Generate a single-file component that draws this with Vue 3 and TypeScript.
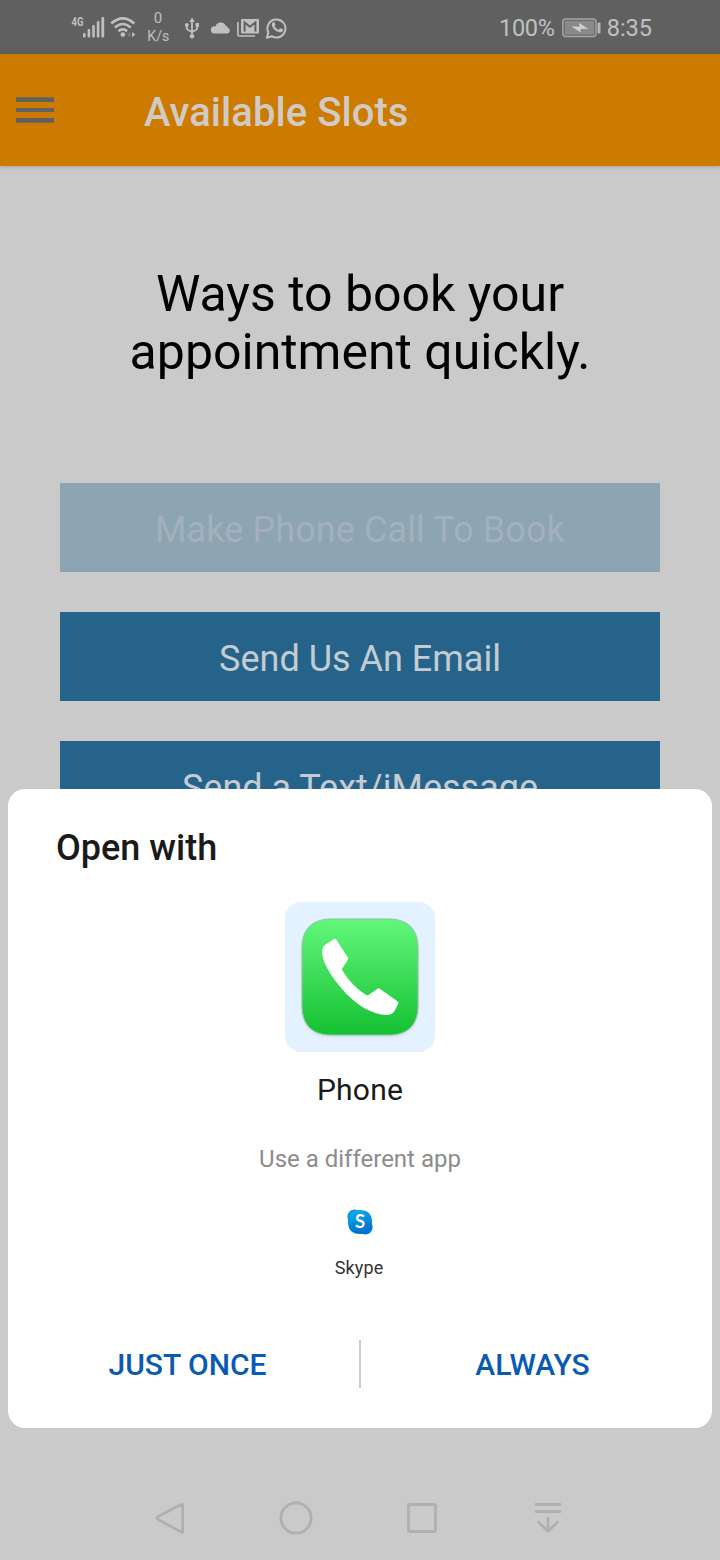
<script setup lang="ts">
interface Action { label: string; faded?: boolean; cls: string }

const headingLines: string[] = ['Ways to book your', 'appointment quickly.']
const actions: Action[] = [
  { label: 'Make Phone Call To Book', faded: true, cls: 'call' },
  { label: 'Send Us An Email', cls: 'email' },
  { label: 'Send a Text/iMessage', cls: 'text' },
]
</script>

<template>
  <div class="screen">
    <header class="status">
      <svg class="status-icons" width="300" height="54" viewBox="0 0 300 54">
        <text class="net" x="71.5" y="26" textLength="12" lengthAdjust="spacingAndGlyphs">4G</text>
        <g fill="#c0c0c0">
          <rect x="83" y="33" width="2.6" height="4.5" rx="1" />
          <rect x="87.6" y="29" width="2.6" height="8.500" rx="1" />
          <rect x="92.2" y="25" width="2.6" height="12.5" rx="1" />
          <rect x="96.8" y="21" width="2.6" height="16.5" rx="1" />
          <rect x="101.4" y="17" width="2.8" height="20.5" rx="1" />
        </g>
        <g fill="none" stroke="#c0c0c0" stroke-width="2.6">
          <path d="M111.300 23.500Q122.800 13.200 134.300 23.500" />
          <path d="M114.900 27.500Q122.800 20.500 130.700 27.500" />
          <path d="M118.500 31.300Q122.800 27.600 127.100 31.300" />
        </g>
        <circle cx="122.800" cy="34.600" r="2.300" fill="#c0c0c0" />
        <path d="M130.300 32.200v4.800l-3-2.400z" fill="#858585" />
        <path d="M132.200 32v5.200l3.100-2.600z" fill="#c0c0c0" />
        <text class="speed" x="158" y="23" text-anchor="middle">0</text>
        <text class="speed" x="158.300" y="41" text-anchor="middle" textLength="22" lengthAdjust="spacingAndGlyphs">K/s</text>
        <g fill="none" stroke="#c0c0c0" stroke-width="1.800">
          <path d="M192 20v16M186.800 25.500v2.700q0 1.300 1.300 1.800l3.900 2.100l3.900-2.100q1.300-.5 1.300-1.800v-3" />
        </g>
        <path d="M192 17.500l2.800 4.500h-5.600z" fill="#c0c0c0" />
        <circle cx="192" cy="36.300" r="2.200" fill="#c0c0c0" />
        <circle cx="186.800" cy="25" r="1.900" fill="#c0c0c0" />
        <rect x="195.500" y="23" width="3.500" height="3.700" fill="#c0c0c0" />
        <path d="M213.500 33.500a3.700 3.700 0 0 1 .4-7.200q1-.1 1.500.2a5.600 5.600 0 0 1 10.300-.9a3.100 3.100 0 0 1 1.800 2a3 3 0 0 1-.2 5.900z" fill="#c0c0c0" />
        <path d="M237.900 22v12.500q0 1.500 1.500 1.500h15.600" fill="none" stroke="#c0c0c0" stroke-width="1.700" />
        <rect x="241" y="19" width="18" height="14.500" rx="1" fill="#c0c0c0" />
        <path d="M244.600 31.500v-9l5.400 4.300l5.400-4.300v9" fill="none" stroke="#606060" stroke-width="2" />
        <path d="M266.800 37.700l1.500-5.300a9 9 0 1 1 3.600 3.900z" fill="none" stroke="#c0c0c0" stroke-width="2" stroke-linejoin="round" />
        <path d="M272.600 22.600q1.400-1.300 2 0l.8 2q.1.600-.9 1.700q1.400 2.500 4 3.600l1.300-1.500q.4-.4.900-.1l2 1q.8.500.1 1.700c-1 1.500-2.800 1.700-4.500 1c-3-1-5.200-3.300-6.200-5.700q-.7-2 .5-3.700z" fill="#c0c0c0" />
      </svg>
      <div class="power">
        <span class="pct">100%</span>
        <svg class="battery" width="40" height="20" viewBox="0 0 40 20">
          <rect x="1.800" y="1" width="33.200" height="17.500" rx="3" fill="#6b6b6b" stroke="#a6a6a6" stroke-width="1.400" />
          <rect x="3.800" y="3" width="29.200" height="13.500" rx="1" fill="#8a8a8a" />
          <path d="M10.500 8.600l8.200 .1l-.8-3.900l9.300 6.200l-7.800-.2l.6 3.700z" fill="#d2d2d2" />
          <rect x="36.500" y="4.500" width="3" height="11" rx="1" fill="#b5b5b5" />
        </svg>
        <span class="clock">8:35</span>
      </div>
    </header>

    <nav class="appbar">
      <svg class="menu" width="38" height="26" viewBox="0 0 38 26" fill="#606060">
        <rect y="0.300" width="38" height="4.700" />
        <rect y="11" width="38" height="4" />
        <rect y="21" width="38" height="4.700" />
      </svg>
      <h1 class="title">Available Slots</h1>
    </nav>

    <main class="content">
      <h2 class="heading">
        <span v-for="(line, i) in headingLines" :key="line" :class="['line', 'line' + i]">{{ line }}</span>
      </h2>
      <div class="actions">
        <button v-for="a in actions" :key="a.label" :class="['action', a.cls, { faded: a.faded }]">{{ a.label }}</button>
      </div>
    </main>

    <section class="sheet">
      <h3 class="sheet-title">Open with</h3>
      <div class="tile">
        <svg width="150" height="150" viewBox="0 0 150 150">
          <defs>
            <linearGradient id="green" x1="0" y1="0" x2="0" y2="1">
              <stop offset="0" stop-color="#62f77b" />
              <stop offset="1" stop-color="#15c032" />
            </linearGradient>
          </defs>
          <path class="squircle" d="M47 17H103C123 17 133 27 133 47V103C133 123 123 133 103 133H47C27 133 17 123 17 103V47C17 27 27 17 47 17Z" fill="url(#green)" stroke="#91c2a8" stroke-width="1" />
          <path d="M49.300 36.800Q50.800 36.600 51.600 38L63 55.800Q63.500 57 62.700 58L57.200 66.700Q57 68 57.700 69C63.500 78.500 72 87.500 81.300 93Q82.500 93.700 83.600 93L92.500 86.700Q93.500 86 94.700 86.800L112.500 99.200Q113.900 100.200 113.200 101.800L109.500 109Q107 113 101.500 113C87 112.700 71 103 57 87C44.500 72.500 37.200 59 37.200 50.500Q37.200 45.500 39.500 43.200Z" fill="#fff" />
        </svg>
      </div>
      <p class="app-name">Phone</p>
      <p class="different">Use a different app</p>
      <svg class="skype" width="28" height="28" viewBox="0 0 28 28">
        <defs>
          <linearGradient id="sky" x1="0" y1="0" x2="0.300" y2="1">
            <stop offset="0" stop-color="#11b2ee" />
            <stop offset="1" stop-color="#0070d0" />
          </linearGradient>
        </defs>
        <circle cx="8.600" cy="8.700" r="7.200" fill="#0797d8" />
        <circle cx="19.400" cy="19.400" r="7.200" fill="#007ed6" />
        <path d="M14 2C22 2 26 6 26 14S22 26 14 26S2 22 2 14S6 2 14 2Z" fill="url(#sky)" />
        <text class="skype-s" x="14" y="20.300" text-anchor="middle">S</text>
      </svg>
      <p class="skype-name">Skype</p>
      <div class="choices">
        <button class="choice">JUST ONCE</button>
        <i class="divider"></i>
        <button class="choice">ALWAYS</button>
      </div>
    </section>

    <footer class="softkeys">
      <svg width="34" height="36" viewBox="0 0 34 36"><path d="M28.600 4.300Q29.600 3.600 29.600 5V31.500Q29.600 33 28.600 32.300L4.300 18.900Q3 18 4.300 17.100Z" /></svg>
      <svg width="34" height="36" viewBox="0 0 34 36"><circle cx="17" cy="18" r="15.200" /></svg>
      <svg width="34" height="36" viewBox="0 0 34 36"><rect x="3.500" y="4.500" width="27" height="27" rx="1" /></svg>
      <svg width="34" height="36" viewBox="0 0 34 36"><path d="M5 4.500H29M5 11.500H29M17 18V31M7.500 22L17 31.500L26.500 22" stroke-linecap="round" /></svg>
    </footer>
  </div>
</template>

<style>
body { margin: 0; overflow: hidden; }
</style>

<style scoped>
.screen {
  position: relative;
  display: flex;
  flex-direction: column;
  width: 720px;
  height: 1560px;
  overflow: hidden;
  background: #cacaca;
  font-family: Roboto, "Liberation Sans", sans-serif;
}
h1, h2, h3, p { margin: 0; font-weight: 400; }
button { padding: 0; border: 0; font: inherit; }
svg { display: block; flex: none; }

.status {
  display: flex;
  justify-content: space-between;
  height: 54px;
  flex: none;
  background: #606060;
  color: #c0c0c0;
}
.net { font-size: 12px; font-weight: 700; fill: #c0c0c0; }
.speed { font-size: 15px; fill: #c0c0c0; }
.power { display: flex; align-items: center; height: 56px; padding-right: 68px; font-size: 24px; }
.pct { font-size: 23.500px; letter-spacing: -0.300px; }
.clock { font-size: 23.500px; }
.battery { margin: 0 6px; }

.appbar {
  display: flex;
  align-items: center;
  flex: none;
  height: 112px;
  padding-left: 16px;
  background: #cc7a00;
  box-shadow: 0 1px 4px rgba(0, 0, 0, 0.2);
}
.title { margin: 6px 0 0 90px; font-size: 40px; font-weight: 500; line-height: 48px; letter-spacing: 0.050px; color: #d0cbc4; }

.content { display: flex; flex-direction: column; padding: 99px 60px 0; }
.heading { display: flex; flex-direction: column; align-items: center; font-size: 50px; line-height: 58px; color: #000; }
.line { white-space: nowrap; }
.actions { display: flex; flex-direction: column; gap: 40px; margin-top: 102px; }
.action { height: 89px; padding-top: 4px; background: #25638a; color: #c5ccd1; font-size: 36px; }
.faded { background: #8da4b2; color: #a2b1bb; letter-spacing: 0.100px; }

.sheet {
  position: absolute;
  top: 789px;
  left: 8px;
  display: flex;
  flex-direction: column;
  align-items: center;
  box-sizing: border-box;
  width: 704px;
  height: 639px;
  padding-top: 37px;
  border-radius: 17px;
  background: #fff;
}
.sheet-title { align-self: flex-start; margin-left: 48px; font-size: 36px; font-weight: 500; line-height: 44px; color: #1a1a1a; }
.tile { width: 150px; height: 150px; margin-top: 32px; border-radius: 16px; background: #e3f2fe; }
.squircle { filter: drop-shadow(0 1px 1px rgba(70, 110, 130, 0.2)); }
.app-name { margin-top: 20px; font-size: 30px; line-height: 36px; letter-spacing: 0.200px; color: #1a1a1a; }
.different { margin-top: 37px; font-size: 24px; line-height: 28px; color: #8c8c8c; }
.skype { margin-top: 35px; }
.skype-s { font-family: Lato, Roboto, sans-serif; font-size: 18.500px; font-weight: 700; fill: #fff; }
.skype-name { margin: 21px 2px 0 0; font-size: 18px; line-height: 22px; letter-spacing: 0.150px; color: #333; }
.choices { display: flex; align-items: center; box-sizing: border-box; width: 100%; margin-top: 61px; padding: 0 8px; }
.choice { flex: 1; height: 48px; padding-top: 1px; background: none; color: #0a59b5; font-size: 30px; font-weight: 500; }
.divider { width: 2px; height: 48px; background: #ccc; }

.softkeys {
  position: absolute;
  right: 0;
  bottom: 24px;
  left: 0;
  display: flex;
  gap: 92px;
  padding-left: 153px;
}
.softkeys svg { fill: none; stroke: #b0b0b0; stroke-width: 2.800; stroke-linejoin: round; }
</style>
